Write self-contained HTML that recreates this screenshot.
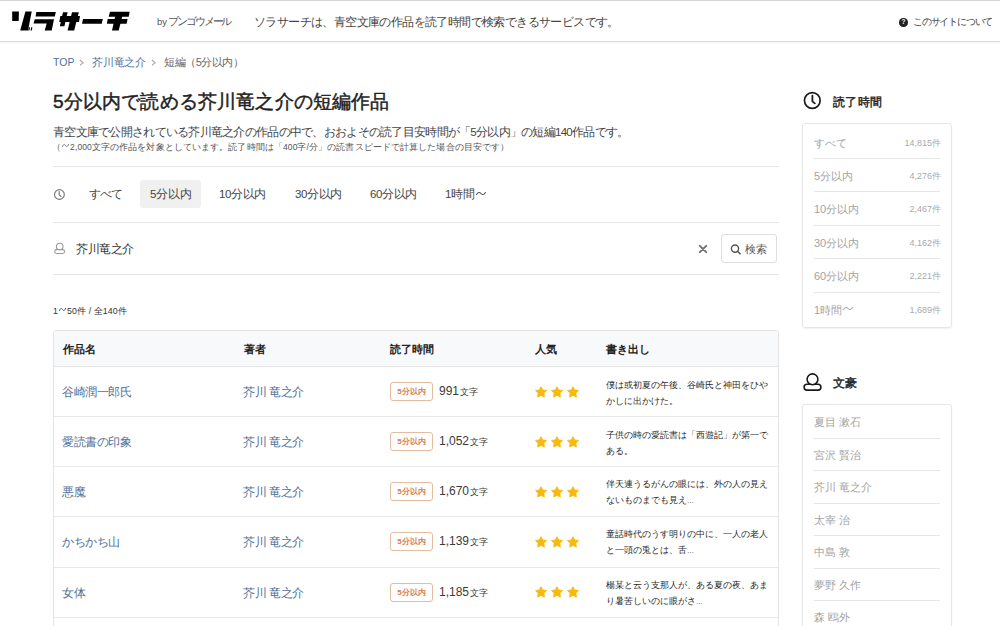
<!DOCTYPE html>
<html lang="ja"><head><meta charset="utf-8">
<style>
*{box-sizing:border-box;margin:0;padding:0}
html,body{width:1000px;height:626px;overflow:hidden;background:#fff}
body{font-family:"Liberation Sans",sans-serif;color:#333;position:relative}
.a{position:absolute;white-space:nowrap}
#hdr{position:absolute;left:0;top:0;width:1000px;height:42px;border-top:1px solid #d6d6d6;border-bottom:1px solid #dcdcdc;box-shadow:0 1px 1px rgba(0,0,0,.04)}
.hr{position:absolute;height:1px;background:#e6e6e6}
.crumb{font-size:11px;color:#666;top:55px}
.blue{color:#4f7199}
.sep{color:#bbb}
h1{position:absolute;left:53px;top:89px;letter-spacing:0.17px;font-size:19px;font-weight:normal;-webkit-text-stroke:0.45px #222;color:#222;white-space:nowrap}
.tab{position:absolute;top:187px;font-size:11.5px;color:#444;white-space:nowrap}
table{position:absolute;left:53px;top:330px;width:726px;border-collapse:separate;border-spacing:0;border:1px solid #e3e3e3;border-radius:3px;overflow:hidden}
th{background:#f8f9fb;height:36px;text-align:left;font-size:11px;padding-top:1px !important;font-weight:bold;color:#222;border-bottom:1px solid #e6e6e6;padding:0}
td{height:50.15px;border-bottom:1px solid #e8e8e8;font-size:11px;padding:0;vertical-align:middle}
.ttl{color:#4f7199;padding-left:8px;padding-top:2px;font-size:11.5px;letter-spacing:-0.5px}
td.blue{font-size:11.5px;letter-spacing:-0.35px;text-indent:-1px;padding-top:2px}
.badge{display:inline-block;border:1px solid #e3bd9f;color:#d57e52;font-size:8px;font-weight:bold;border-radius:3px;width:43px;height:19px;line-height:17px;text-align:center;vertical-align:middle}
.len{font-size:12px;color:#3a3a3a;margin-left:6px;vertical-align:middle}
.len small{font-size:9px;margin-left:-2px}
.st{display:block}
.exc{font-size:9px;line-height:16px;color:#2a2a2a;position:relative;top:1px;white-space:normal;width:165px}
.box{position:absolute;left:802px;width:150px;border:1px solid #e6e6e6;border-radius:3px;box-shadow:0 1px 2px rgba(0,0,0,.06)}
.row{position:relative;margin:0 11px;height:33.4px;border-bottom:1px solid #e6e6e6;font-size:11px;color:#a3a3a3;line-height:34px}
.b2 .row{height:32.5px;line-height:32px}
.row:last-child{border-bottom:none}
.row span{position:absolute;right:-1px;font-size:9px;color:#aaa;letter-spacing:0;top:0}
.sh{position:absolute;left:833px;font-size:12px;font-weight:normal;-webkit-text-stroke:0.4px #222;color:#222;letter-spacing:0.4px}
</style></head><body>
<svg width="0" height="0" style="position:absolute"><defs><polygon id="s" fill="#f6b90f" stroke="#f6b90f" stroke-width="0.8" stroke-linejoin="round" points="0.00,-5.7 1.78,-2.45 5.5,-1.87 2.88,0.93 3.4,4.7 0.00,3.02 -3.4,4.7 -2.88,0.93 -5.5,-1.87 -1.78,-2.45"/></defs></svg>
<div id="hdr"></div>
<!-- logo -->
<svg class="a" style="left:0;top:0" width="140" height="42" viewBox="0 0 140 42">
<g fill="#000">
<polygon points="12.2,11.6 18.9,11.6 18.7,21 12.2,21"/>
<polygon points="25.4,11.6 31.7,11.6 28,30.6 20.2,30.6"/>
<polygon points="28.8,27.2 30,27.2 29.4,30.6 28.2,30.6"/>
<polygon points="31.2,27.2 32.4,27.2 31.8,30.6 30.6,30.6"/>
<polygon points="36.3,11.9 55.8,11.9 54.8,16.6 35.6,16.6"/>
<polygon points="34.8,19.2 54,19.2 51.7,30.6 44.7,30.6 46.7,23.6 33.5,23.6"/>
<polygon points="63,12.25 67.6,12.25 64.4,26.25 59.8,26.25"/>
<polygon points="60.3,16 80,16 79,22 59.3,22"/>
<polygon points="72,12.25 78.8,12.25 74.2,30.5 67.6,30.5"/>
<polygon points="83,19 102.75,19 101.75,23.75 82,23.75"/>
<polygon points="110,11.7 129.7,11.7 128.7,16.7 108.7,16.7"/>
<polygon points="107.7,19 127.6,19 126.6,23.8 106.9,23.8"/>
<polygon points="115.3,16 122.3,16 118.7,30.6 112,30.6"/>
</g></svg>
<div class="a" style="left:157px;top:15px;font-size:10.5px;color:#555"><span style="font-size:9.5px">by</span><span style="letter-spacing:-2.1px;margin-left:1px">ブンゴウメール</span></div>
<div class="a" style="left:254px;top:15px;font-size:11.5px;color:#444;letter-spacing:-0.6px">ソラサーチは、青空文庫の作品を読了時間で検索できるサービスです。</div>
<div class="a" style="left:899.3px;top:18.4px;width:8.5px;height:8.5px;border-radius:50%;background:#222;color:#fff;font-size:6.5px;line-height:8.5px;text-align:center;font-weight:bold">?</div><div class="a" style="left:913px;top:15px;font-size:10px;color:#444;letter-spacing:-1.2px">このサイトについて</div>

<!-- breadcrumb -->
<div class="a crumb blue" style="left:53px;font-size:10.5px;top:56px">TOP</div>
<svg class="a" style="left:79px;top:59px" width="6" height="8"><path d="M1 1L4 3.7L1 6.4" fill="none" stroke="#aaa" stroke-width="1.2"/></svg>
<div class="a crumb blue" style="left:92px;top:55px;letter-spacing:-0.2px">芥川竜之介</div>
<svg class="a" style="left:151px;top:59px" width="6" height="8"><path d="M1 1L4 3.7L1 6.4" fill="none" stroke="#aaa" stroke-width="1.2"/></svg>
<div class="a crumb" style="left:164px;top:55px;letter-spacing:-0.45px">短編（5分以内）</div>
<h1>5分以内で読める芥川竜之介の短編作品</h1>
<div class="a" style="left:53px;top:125px;font-size:11.5px;color:#444;letter-spacing:-0.72px">青空文庫で公開されている芥川竜之介の作品の中で、おおよその読了目安時間が「5分以内」の短編140作品です。</div>
<div class="a" style="left:52px;top:142px;font-size:8.5px;color:#555;letter-spacing:0.1px">（<svg class="wv" width="7" height="5" viewBox="0 0 10 5" preserveAspectRatio="none" style="display:inline-block;vertical-align:0.2em;margin:0 1px"><path d="M0.6 3.6C1.8 1.2 3.6 0.8 5 2.5S8.2 3.8 9.4 1.4" fill="none" stroke="#555" stroke-width="0.9" stroke-linecap="round"/></svg>2,000文字の作品を対象としています。読了時間は「400字/分」の読書スピードで計算した場合の目安です）</div>
<div class="hr" style="left:53px;top:166px;width:726px"></div>
<!-- tabs -->
<svg class="a" style="left:53px;top:188px" width="13" height="13" viewBox="0 0 13 13"><circle cx="6.4" cy="6.5" r="4.9" fill="none" stroke="#7a7a7a" stroke-width="1.15"/><path d="M6.2 3.6V6.9L7.9 8.3" fill="none" stroke="#7a7a7a" stroke-width="1.2" stroke-linecap="round"/></svg>
<div class="a" style="left:140px;top:180px;width:61px;height:28px;background:#f0f0f0;border-radius:3px"></div>
<div class="tab" style="left:89px;letter-spacing:-1px">すべて</div>
<div class="tab" style="left:150px">5分以内</div>
<div class="tab" style="left:219px;letter-spacing:-0.35px">10分以内</div>
<div class="tab" style="left:295px;letter-spacing:-0.35px">30分以内</div>
<div class="tab" style="left:370px;letter-spacing:-0.35px">60分以内</div>
<div class="tab" style="left:445px">1時間<svg class="wv" width="10" height="5" viewBox="0 0 10 5" preserveAspectRatio="none" style="display:inline-block;vertical-align:0.2em;margin:0 1px"><path d="M0.6 3.6C1.8 1.2 3.6 0.8 5 2.5S8.2 3.8 9.4 1.4" fill="none" stroke="#555" stroke-width="1.1" stroke-linecap="round"/></svg></div>
<div class="hr" style="left:53px;top:222px;width:726px"></div>
<!-- search -->
<svg class="a" style="left:48px;top:236px" width="24" height="24" viewBox="0 0 24 24"><rect x="6.7" y="13.6" width="9.9" height="3.9" rx="1.9" fill="none" stroke="#9a9a9a" stroke-width="1.1"/><circle cx="11.7" cy="10.5" r="3.3" fill="#fff" stroke="#9a9a9a" stroke-width="1.1"/></svg>
<div class="a" style="left:76px;top:242px;font-size:11.5px;color:#333;letter-spacing:-0.4px">芥川竜之介</div>
<svg class="a" style="left:698px;top:244px" width="10" height="10" viewBox="0 0 10 10"><path d="M1.8 1.8L8.2 8.2M8.2 1.8L1.8 8.2" stroke="#707070" stroke-width="1.9" stroke-linecap="round"/></svg>
<div class="a" style="left:721px;top:234px;width:56px;height:29px;border:1px solid #dedede;border-radius:3px"></div>
<svg class="a" style="left:730px;top:244px" width="12" height="11" viewBox="0 0 12 11"><circle cx="5" cy="4.6" r="3.6" fill="none" stroke="#555" stroke-width="1.4"/><path d="M7.6 7.3L10.5 10.2" stroke="#555" stroke-width="1.6"/></svg>
<div class="a" style="left:745px;top:242px;font-size:11px;color:#555">検索</div>
<div class="hr" style="left:53px;top:274px;width:726px"></div>
<div class="a" style="left:53px;top:306px;font-size:8.8px;color:#333;letter-spacing:0.1px">1<svg class="wv" width="7" height="5" viewBox="0 0 10 5" preserveAspectRatio="none" style="display:inline-block;vertical-align:0.2em;margin:0 1px"><path d="M0.6 3.6C1.8 1.2 3.6 0.8 5 2.5S8.2 3.8 9.4 1.4" fill="none" stroke="#333" stroke-width="1.0" stroke-linecap="round"/></svg>50件 / 全140件</div>

<!-- table -->
<table>
<colgroup><col style="width:190px"><col style="width:146px"><col style="width:145px"><col style="width:71px"><col></colgroup>
<tr><th style="padding-left:9px">作品名</th><th>著者</th><th>読了時間</th><th>人気</th><th>書き出し</th></tr>
<tr><td class="ttl">谷崎潤一郎氏</td><td class="blue">芥川 竜之介</td><td><span class="badge">5分以内</span><span class="len">991 <small>文字</small></span></td><td><svg class="st" width="50" height="14" viewBox="0 0 50 14"><use href="#s" x="6" y="7.4"/><use href="#s" x="22" y="7.4"/><use href="#s" x="38" y="7.4"/></svg></td><td><div class="exc">僕は或初夏の午後、谷崎氏と神田をひやかしに出かけた。</div></td></tr>
<tr><td class="ttl">愛読書の印象</td><td class="blue">芥川 竜之介</td><td><span class="badge">5分以内</span><span class="len">1,052 <small>文字</small></span></td><td><svg class="st" width="50" height="14" viewBox="0 0 50 14"><use href="#s" x="6" y="7.4"/><use href="#s" x="22" y="7.4"/><use href="#s" x="38" y="7.4"/></svg></td><td><div class="exc">子供の時の愛読書は「西遊記」が第一である。</div></td></tr>
<tr><td class="ttl">悪魔</td><td class="blue">芥川 竜之介</td><td><span class="badge">5分以内</span><span class="len">1,670 <small>文字</small></span></td><td><svg class="st" width="50" height="14" viewBox="0 0 50 14"><use href="#s" x="6" y="7.4"/><use href="#s" x="22" y="7.4"/><use href="#s" x="38" y="7.4"/></svg></td><td><div class="exc">伴天連うるがんの眼には、外の人の見えないものまでも見え<span style="font-size:7px;letter-spacing:-0.5px">…</span></div></td></tr>
<tr><td class="ttl">かちかち山</td><td class="blue">芥川 竜之介</td><td><span class="badge">5分以内</span><span class="len">1,139 <small>文字</small></span></td><td><svg class="st" width="50" height="14" viewBox="0 0 50 14"><use href="#s" x="6" y="7.4"/><use href="#s" x="22" y="7.4"/><use href="#s" x="38" y="7.4"/></svg></td><td><div class="exc">童話時代のうす明りの中に、一人の老人と一頭の兎とは、舌<span style="font-size:7px;letter-spacing:-0.5px">…</span></div></td></tr>
<tr><td class="ttl">女体</td><td class="blue">芥川 竜之介</td><td><span class="badge">5分以内</span><span class="len">1,185 <small>文字</small></span></td><td><svg class="st" width="50" height="14" viewBox="0 0 50 14"><use href="#s" x="6" y="7.4"/><use href="#s" x="22" y="7.4"/><use href="#s" x="38" y="7.4"/></svg></td><td><div class="exc">楊某と云う支那人が、ある夏の夜、あまり暑苦しいのに眼がさ<span style="font-size:7px;letter-spacing:-0.5px">…</span></div></td></tr>
<tr><td class="ttl">蜘蛛の糸</td><td class="blue">芥川 竜之介</td><td><span class="badge">5分以内</span><span class="len">1,200 <small>文字</small></span></td><td><svg class="st" width="50" height="14" viewBox="0 0 50 14"><use href="#s" x="6" y="7.4"/><use href="#s" x="22" y="7.4"/><use href="#s" x="38" y="7.4"/></svg></td><td><div class="exc">ある日の事でございます。</div></td></tr>
</table>

<!-- sidebar -->
<svg class="a" style="left:798px;top:88px" width="30" height="28" viewBox="0 0 30 28"><circle cx="14.3" cy="12.5" r="7.85" fill="none" stroke="#1a1a1a" stroke-width="1.7"/><path d="M14.4 7.6V13.4L16.8 15.4" fill="none" stroke="#1a1a1a" stroke-width="1.8" stroke-linecap="round" stroke-linejoin="round"/></svg>
<div class="sh" style="top:94px">読了時間</div>
<div class="box" style="top:123px;height:205px;padding-top:1.6px">
<div class="row">すべて<span>14,815件</span></div>
<div class="row">5分以内<span>4,276件</span></div>
<div class="row">10分以内<span>2,467件</span></div>
<div class="row">30分以内<span>4,162件</span></div>
<div class="row">60分以内<span>2,221件</span></div>
<div class="row">1時間<svg class="wv" width="10" height="5" viewBox="0 0 10 5" preserveAspectRatio="none" style="display:inline-block;vertical-align:0.2em;margin:0 1px"><path d="M0.6 3.6C1.8 1.2 3.6 0.8 5 2.5S8.2 3.8 9.4 1.4" fill="none" stroke="#aaa" stroke-width="1.1" stroke-linecap="round"/></svg><span>1,689件</span></div>
</div>
<svg class="a" style="left:798px;top:366px" width="30" height="30" viewBox="0 0 30 30"><rect x="6.1" y="18.3" width="16.8" height="5.8" rx="2.9" fill="none" stroke="#1a1a1a" stroke-width="1.6"/><circle cx="14.5" cy="13.3" r="5.4" fill="#fff" stroke="#1a1a1a" stroke-width="1.6"/></svg>
<div class="sh" style="top:375px">文豪</div>
<div class="box b2" style="top:404px;height:260px;padding-top:1px">
<div class="row">夏目 漱石</div>
<div class="row">宮沢 賢治</div>
<div class="row">芥川 竜之介</div>
<div class="row">太宰 治</div>
<div class="row">中島 敦</div>
<div class="row">夢野 久作</div>
<div class="row">森 鴎外</div>
</div>
</body></html>
